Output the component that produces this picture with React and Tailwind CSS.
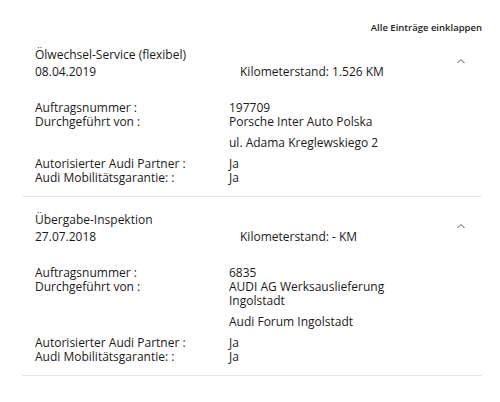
import React from 'react';

const entries = [
    {
        title: 'Ölwechsel-Service (flexibel)',
        date: '08.04.2019',
        km: '1.526',
        order: '197709',
        by: ['Porsche Inter Auto Polska'],
        address: 'ul. Adama Kreglewskiego 2',
    },
    {
        title: 'Übergabe-Inspektion',
        date: '27.07.2018',
        km: '-',
        order: '6835',
        by: ['AUDI AG Werksauslieferung', 'Ingolstadt'],
        address: 'Audi Forum Ingolstadt',
    },
];

const Chevron = () => (
    <svg width="10" height="6" viewBox="0 0 10 6" fill="none" className="text-[#555]">
        <path d="M1.5 5L5 1.5L8.5 5" stroke="currentColor" strokeWidth="1" />
    </svg>
);

const Entry = ({ title, date, km, order, by, address, first }) => (
    <div className={`border-b border-[#e6e6e6] pl-[13px] pr-[16px] pb-[11px] ${first ? 'pt-[10px]' : 'pt-[14px]'}`}>
        <div className="flex">
            <div className="w-[194px] leading-[17px]">
                <div>{title}</div>
                <div>{date}</div>
            </div>
            <div className="flex-1 pl-[11px] pt-[17px] leading-[17px]">Kilometerstand: {km} KM</div>
            <div className="pt-[12px]">
                <Chevron />
            </div>
        </div>
        <div className="mt-[21px] flex flex-col gap-[7px] leading-[14px]">
            <div className="flex">
                <div className="w-[194px]">
                    <div>Auftragsnummer :</div>
                    <div>Durchgeführt von :</div>
                </div>
                <div>
                    <div>{order}</div>
                    {by.map((line) => (
                        <div key={line}>{line}</div>
                    ))}
                </div>
            </div>
            <div className="flex">
                <div className="w-[194px]"></div>
                <div>{address}</div>
            </div>
            <div className="flex">
                <div className="w-[194px]">
                    <div>Autorisierter Audi Partner :</div>
                    <div>Audi Mobilitätsgarantie: :</div>
                </div>
                <div>
                    <div>Ja</div>
                    <div>Ja</div>
                </div>
            </div>
        </div>
    </div>
);

export default function App() {
    return (
        <div className="w-[500px] h-[402px] bg-white pl-[22px] pr-[18px] text-[12px] text-[#1a1a1a] font-['Open_Sans',sans-serif]">
            <div className="flex justify-end pt-[20px] leading-[16px]">
                <button className="text-[9.5px] font-semibold text-[#222]">Alle Einträge einklappen</button>
            </div>
            {entries.map((e, i) => (
                <Entry key={e.title} first={i === 0} {...e} />
            ))}
        </div>
    );
}
